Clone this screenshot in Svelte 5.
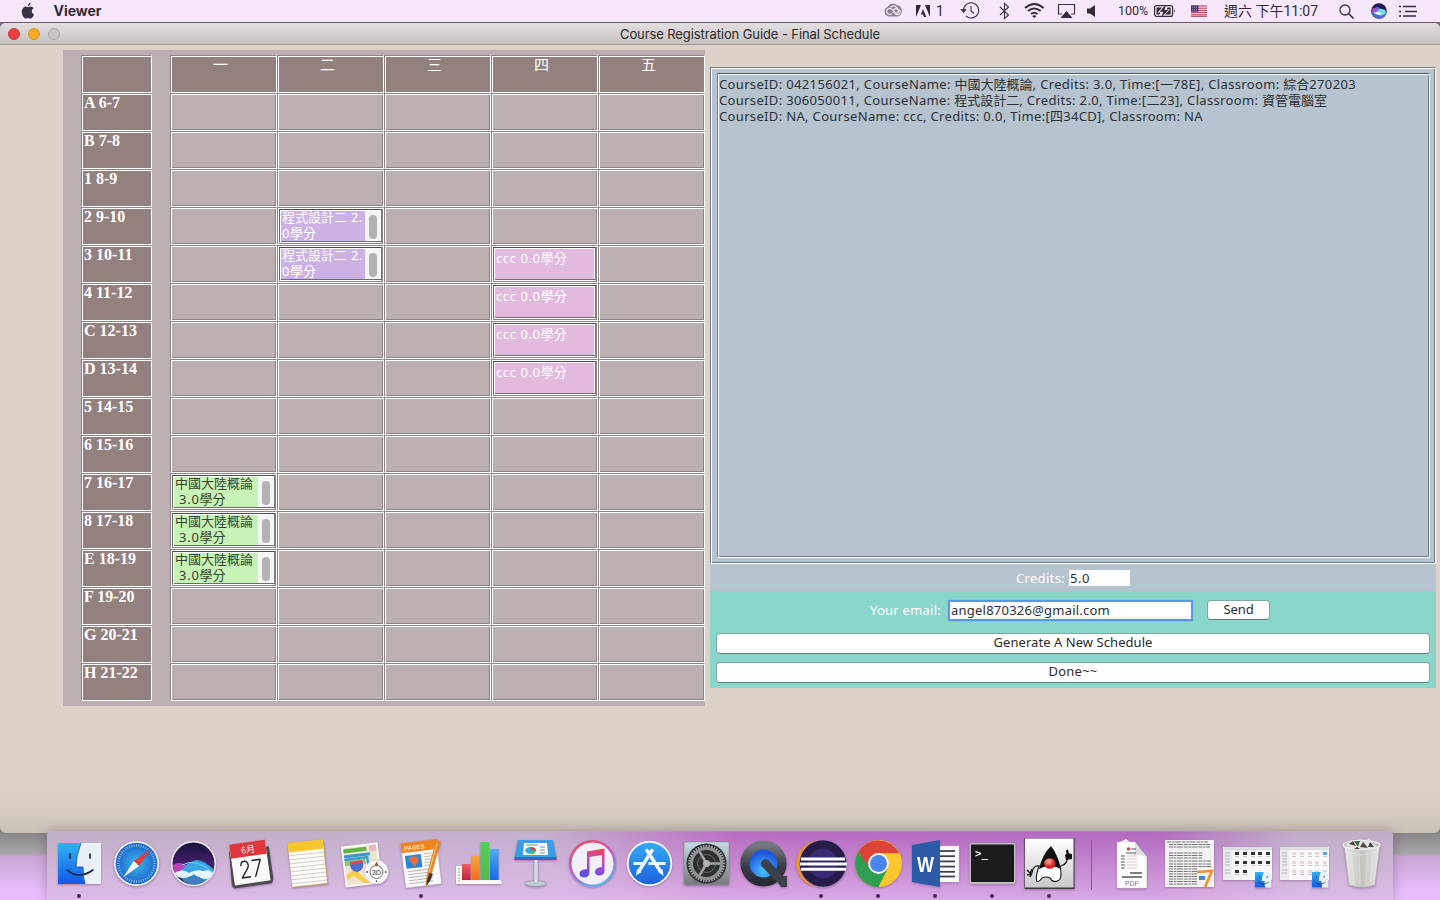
<script>
  const days = ['一', '二', '三', '四', '五'];
  const slots = ['A 6-7', 'B 7-8', '1 8-9', '2 9-10', '3 10-11', '4 11-12', 'C 12-13', 'D 13-14',
    '5 14-15', '6 15-16', '7 16-17', '8 17-18', 'E 18-19', 'F 19-20', 'G 20-21', 'H 21-22'];

  const china = { kind: 'green', lines: ['中國大陸概論', ' 3.0學分'], scroll: true };
  const prog = { kind: 'purple', lines: ['程式設計二 2.', '0學分'], scroll: true };
  const ccc = { kind: 'pink', lines: ['ccc 0.0學分'], scroll: false };
  const booked = {
    '3-1': prog, '4-1': prog,
    '4-3': ccc, '5-3': ccc, '6-3': ccc, '7-3': ccc,
    '10-0': china, '11-0': china, '12-0': china
  };

  const courses = [
    { text: 'CourseID: 042156021, CourseName: 中國大陸概論, Credits: 3.0, Time:[一78E], Classroom: 綜合270203', w: 637 },
    { text: 'CourseID: 306050011, CourseName: 程式設計二, Credits: 2.0, Time:[二23], Classroom: 資管電腦室', w: 608 },
    { text: 'CourseID: NA, CourseName: ccc, Credits: 0.0, Time:[四34CD], Classroom: NA', w: 484 }
  ];

  let email = $state('angel870326@gmail.com');

  const running = ['finder', 'pages', 'eclipse', 'chrome', 'word', 'terminal', 'java'];
  const apps = ['finder', 'safari', 'siri', 'calendar', 'notes', 'maps', 'pages', 'numbers', 'keynote',
    'itunes', 'appstore', 'settings', 'quicktime', 'eclipse', 'chrome', 'word', 'terminal', 'java'];
  const stacks = ['pdf', 'doc', 'folders', 'folders2', 'trash'];

  const isHan = (s) => /[\u4e00-\u9fff]/.test(s);
  const split = (s) => s.split(/([\u4e00-\u9fff]+)/).filter(Boolean);

  // Tracks the Latin text so that the whole run fills the given width.
  function fit(node, width) {
    node.style.letterSpacing = '0px';
    const natural = node.getBoundingClientRect().width;
    let count = node.textContent.length;
    for (const h of node.querySelectorAll('b')) count -= h.textContent.length;
    node.style.letterSpacing = `${(width - natural) / count}px`;
  }

  const ticks = (n) => Array.from({ length: n }, (_, i) => (i * 360) / n);
</script>

{#snippet mixed(text)}{#each split(text) as part}{#if isHan(part)}<b>{part}</b>{:else}{part}{/if}{/each}{/snippet}

{#snippet miniFinder(x, y, s)}
  <g transform="translate({x} {y}) scale({s})">
    <path d="M0 0h43v41H0z" fill="#e9f0f8" />
    <path d="M0 0H23Q18 13 18 24H25Q25 34 27 41H0z" fill="url(#gFinder)" />
    <path d="M12 11v4M32 11v4" stroke="#16233c" stroke-width="1.700" stroke-linecap="round" />
    <path d="M9 27Q21 37 35 27" fill="none" stroke="#16233c" stroke-width="1.600" stroke-linecap="round" />
  </g>
{/snippet}

{#snippet icon(name)}
  <svg class="app" viewBox="0 0 57 57">
    {#if name === 'finder'}
      {@render miniFinder(7, 8, 1)}
      <path d="M30 8Q25 21 25 32H32Q32 42 34 49" fill="none" stroke="#1b4d94" stroke-width=".8" />
    {:else if name === 'safari'}
      <circle cx="28.5" cy="28.5" r="22.8" fill="#eef0f4" stroke="#a9a4b4" stroke-width=".6" />
      <circle cx="28.5" cy="28.5" r="20.8" fill="url(#gSafari)" />
      {#each ticks(48) as a}
        <path d="M28.5 9v2.6" stroke="#c9e6fb" stroke-width=".6" transform="rotate({a} 28.5 28.5)" />
      {/each}
      <path d="M43 14 25.8 26.1 31 31z" fill="#e33b35" />
      <path d="M15 42.5 25.8 26.1 31 31z" fill="#f4f4f4" />
    {:else if name === 'siri'}
      <circle cx="28.5" cy="28.5" r="22.8" fill="#e8e6ee" />
      <circle cx="28.5" cy="28.5" r="21" fill="url(#gSiri)" />
      <path d="M8 30Q14 26 21 30 28 25 35 27T49 34L47 38Q36 44 26 39T9 38z" fill="#e04bd0" opacity=".8" />
      <path d="M13 39Q24 26 31 25T49 35Q44 48 29 49 18 48 13 39z" fill="#23b5ec" opacity=".85" />
      <path d="M9 38Q17 33 24 38 31 34 38 36 45 34 48 38 45 44 40 44 34 44 29 39 21 45 13 42z" fill="#effaff" opacity=".95" />
      <path d="M18 46Q29 36 40 46 29 53 18 46z" fill="#3f7fc0" />
      <path d="M17 30Q31 22 48 38" fill="none" stroke="#6fe3f8" />
    {:else if name === 'calendar'}
      <g transform="rotate(-8 28.5 28.5)">
        <path d="M9 14 7 48l2 3h38l2-4V14z" fill="#4b4b50" />
        <path d="M10 8h36v40H10z" fill="#fafafa" />
        <path d="M10 7h36v14H10z" fill="#dc383d" />
        <text x="28" y="17.5" text-anchor="middle" font-size="9" fill="#fff" class="cjk">6月</text>
        <text x="28.3" y="42.500" text-anchor="middle" font-size="24" fill="#222" class="thin" textLength="24" lengthAdjust="spacingAndGlyphs">27</text>
      </g>
    {:else if name === 'notes'}
      <g transform="rotate(-6 28.5 28.5)">
        <path d="M11 7h36v44H11z" fill="#c4a262" />
        <path d="M11 7h35v43H11z" fill="#fdfcf7" />
        <path d="M11 6h35v9.500H11z" fill="#f6c62d" />
        {#each [19, 23, 27, 31, 35, 39, 43, 47] as y}
          <path d="M11 {y}h35" stroke="#c8c5c1" stroke-width=".8" />
        {/each}
      </g>
    {:else if name === 'maps'}
      <g transform="rotate(-7 28.5 28.5)">
        <path d="M7 9h37v41H7z" fill="#fafaf5" />
        <path d="M9 11h33v37H9z" fill="#ece5d2" />
        <path d="M9 12h23v4H9z" fill="#5fb447" />
        <path d="M9 18h26v3H9z" fill="#3a94d0" />
        <path d="M9 23h21v6H9z" fill="#8fc97a" />
        <path d="M9 22.500h23v20" fill="none" stroke="#3a9cd4" stroke-width="2.500" />
        <path d="M9 38l7-4q5 0 7 5l9 9h-6l-10-9-7 4z" fill="#f7cd45" />
        <path d="M35 11h7v6h-7z" fill="#efb5bf" />
        <path d="M14 26h13v4q-1 5-6.500 6-5.500-1-6.500-6z" fill="#4b6fcf" />
        <path d="M14 25h13v3H14z" fill="#d9455a" />
      </g>
      <circle cx="40.5" cy="37" r="12" fill="#fff" stroke="#b9b6ba" stroke-width=".6" />
      <circle cx="40.500" cy="37" r="6.500" fill="none" stroke="#444" stroke-width=".8" />
      <text x="40.5" y="39.700" text-anchor="middle" font-size="7" fill="#222" class="sans">3D</text>
      <path d="M38.500 30.500l2-4 2 4z" fill="#c93232" />
      <path d="M40.500 45.500v1.500M30.500 37h1.500M49 37h1.500" stroke="#333" stroke-width="1.300" />
    {:else if name === 'pages'}
      <g transform="rotate(-7 28.5 28.5)">
        <path d="M10 8h36v43H10z" fill="#fafafa" stroke="#b8b3b3" stroke-width=".4" />
        <path d="M10 6h37v10H10z" fill="#ee8522" />
        <text x="13" y="13.700" font-size="6" font-weight="700" fill="#ffe3b8" class="sans">PAGES</text>
        <path d="M13 19h16v13H13z" fill="#2c86d8" />
        <path d="M16 22q5-3 10 0 0 5-5 9-2-5-5-9z" fill="#ef6b33" />
        {#each [19, 22, 25, 28, 31] as y}<path d="M32 {y}h8" stroke="#b5b5b5" />{/each}
        {#each [35, 38, 41, 44, 47] as y}<path d="M14 {y}h24" stroke="#b5b5b5" />{/each}
      </g>
      <path d="M43 5l5 1.500-10 35-4 9-1.500-.5 1.500-11z" fill="#e28a2e" />
      <path d="M36.500 38l3.500 1-3 7-3.500 5 .5-6z" fill="#3b3230" />
      <path d="M44 8l-8 29" stroke="#ffc576" />
    {:else if name === 'numbers'}
      <path d="M6 31h6v18H6zM6 45h45l1 4H6z" fill="#f7f7f7" />
      {#each [34, 37, 40, 43, 46] as y}<path d="M8 {y}h2" stroke="#888" stroke-width=".8" />{/each}
      <path d="M12 29h8.500v16H12z" fill="url(#gRed)" />
      <path d="M21.500 20h8v25h-8z" fill="url(#gOrange)" />
      <path d="M30.500 7h8.500v38h-8.500z" fill="url(#gGreen)" />
      <path d="M40 14h8.500v31H40z" fill="url(#gBlue)" />
    {:else if name === 'keynote'}
      <ellipse cx="28.500" cy="48.500" rx="10.500" ry="3" fill="#c5ccd5" stroke="#858c99" stroke-width=".6" />
      <path d="M27 24h4v24h-4z" fill="#d5dce5" stroke="#929ba9" stroke-width=".5" />
      <path d="M11 5h35l3.500 17H7.500z" fill="#3c9ce6" />
      <path d="M7.500 22h42v3h-42z" fill="#2273b8" />
      <path d="M17 8h23l1 12H16z" fill="#fff" />
      <ellipse cx="23.500" cy="15.500" rx="5.500" ry="3.500" fill="#36aee0" />
      <path d="M23.500 15.500V12q5 0 5.500 3.500z" fill="#df4040" />
      <path d="M23.500 15.500H29q-1 3.500-5.500 3.500z" fill="#48b658" />
      <path d="M19 10h12M33 12h5M33 15h5M33 18h5" stroke="#777" stroke-width=".9" />
    {:else if name === 'itunes'}
      <circle cx="28.500" cy="28.500" r="23.500" fill="url(#gRing)" />
      <circle cx="28.500" cy="28.500" r="21" fill="#f3eff6" />
      <path d="M23 16.500 40.500 13.500v22q0 4.500-4.500 5-5 0-5-3.500 0-4.500 7-5V20L25.500 22V37q0 5-5 5.500-5 0-5-4 0-4 7.500-4.500z" fill="url(#gNote)" />
    {:else if name === 'appstore'}
      <circle cx="28.500" cy="28.500" r="22.800" fill="#f0f2f6" />
      <circle cx="28.500" cy="28.500" r="20.800" fill="url(#gStore)" />
      <g stroke="#f0f7ff" stroke-width="3.400" fill="none" stroke-linecap="round">
        <path d="M26 15.500l13.500 21M31 15.500L18 36" />
        <path d="M12.500 28.500h9M27.500 28.500h17" stroke-linecap="butt" stroke-width="2.800" />
      </g>
      <path d="M37 36.500l4.500-2.500 1 7zM16 34l4.500 3-5.500 3.500z" fill="#f0f7ff" />
    {:else if name === 'settings'}
      <rect x="6" y="7" width="45" height="43" rx="2" fill="url(#gSteel)" stroke="#8c8f95" stroke-width=".6" />
      <circle cx="28.500" cy="28.500" r="20" fill="#303234" />
      {#each ticks(40) as a}
        <path d="M28.500 10v4" stroke="#a2a4a6" stroke-width="1.500" transform="rotate({a} 28.500 28.500)" />
      {/each}
      <circle cx="28.500" cy="28.500" r="15" fill="#2d2f31" stroke="#909294" stroke-width="3" />
      {#each [90, 210, 330] as a}
        <path d="M28.500 28.500V15" stroke="#a0a2a4" stroke-width="2.600" transform="rotate({a} 28.500 28.500)" />
      {/each}
      <circle cx="28.500" cy="28.500" r="3.500" fill="#b0b2b4" />
      <circle cx="28.500" cy="28.500" r="9" fill="none" stroke="#77797b" stroke-width=".8" />
    {:else if name === 'quicktime'}
      <circle cx="28.500" cy="28.500" r="18.500" fill="url(#gQt)" stroke="url(#gQtRing)" stroke-width="9" />
      <path d="M27 26q3-4 7 0l14 15h4v11h-6l-2-3L27 31.500q-2-3 0-5.500z" fill="#3c4049" />
    {:else if name === 'eclipse'}
      <circle cx="26" cy="28.500" r="23" fill="#ee922e" />
      <circle cx="30" cy="28.500" r="23.500" fill="#271b4a" stroke="#c8a6d2" stroke-width=".4" />
      <circle cx="30" cy="28.500" r="15" fill="#3a2870" />
      <path d="M8 22.500h44v3H8zM7 27.500h47v3H7zM8 32.700h45v3H8z" fill="#fff" />
    {:else if name === 'chrome'}
      <circle cx="28.500" cy="28.500" r="23.500" fill="#fbc72f" />
      <path d="M28.500 18.200H49.300A23.500 23.500 0 0 0 8.200 16.800l10.500 17.500z" fill="#db4437" />
      <path d="M8.200 16.800A23.500 23.500 0 0 0 28.500 52l9-18-18-1z" fill="#2f9e50" />
      <circle cx="28.500" cy="28.500" r="10.400" fill="#f6f6f6" />
      <circle cx="28.500" cy="28.500" r="8.500" fill="#4a86ea" />
    {:else if name === 'word'}
      <path d="M30 11h22v36H30z" fill="#fbfbfc" stroke="#ccd" stroke-width=".5" />
      {#each [16, 21.200, 26.400, 31.600, 36.800, 41.500] as y}<path d="M33 {y}h15" stroke="#3a4250" stroke-width="1.800" />{/each}
      <path d="M5 10 33 5v47L5 47z" fill="#2c5aa5" />
      <text x="10" y="36.500" font-size="22" textLength="17" lengthAdjust="spacingAndGlyphs" font-weight="700" fill="#fff" class="sans">W</text>
    {:else if name === 'terminal'}
      <rect x="5.500" y="8" width="46" height="41" rx="2" fill="#bdbdbd" />
      <rect x="7" y="9.500" width="43" height="37.500" rx="1" fill="#1b1b1c" />
      <text x="11" y="22" font-size="11" font-weight="700" fill="#eee" class="mono">&gt;_</text>
    {:else if name === 'java'}
      <path d="M3.500 3h50v51h-50z" fill="#3a3a3a" />
      <path d="M4 3.500h48.500v49H4z" fill="url(#gJava)" />
      <path d="M18 31Q12 30 11 38M40 31Q47 29 46 22" fill="none" stroke="#111" stroke-width="1.200" />
      <path d="M6 35l4 4M6 40l5-1M9 42l2-4M11 34l-2 5" stroke="#111" stroke-width="1.400" />
      <path d="M44 20l1 5 6-1v-5l-3-.5-1-4-2 1 .500 3.500z" fill="#111" />
      <path d="M18 31Q14 43 16 46.500 18 47 21 43 25 41 29 43 32 48 36 46 42 45 39 31z" fill="#fff" stroke="#111" stroke-width="1.100" />
      <path d="M30 11Q21 20 18 34q11-6 22 0Q37 20 30 11z" fill="#111" />
      <ellipse cx="28.800" cy="28.500" rx="5.800" ry="5.200" fill="url(#gNose)" />
    {:else if name === 'pdf'}
      <path d="M14 8l8-4 17 13 4 5v31H14z" fill="#f0f0f0" />
      <path d="M13 7h18l11 15v31H13z" fill="#fff" stroke="#d3cbd5" stroke-width=".5" />
      <path d="M31 7q0 10-1 13 7-1 12 2z" fill="#dedede" />
      <circle cx="24.500" cy="14" r="1.800" fill="#cf4452" />
      <path d="M27 14h5M22 18h10" stroke="#555" stroke-width="1.200" />
      {#each [21, 24, 27, 30, 33] as y}<path d="M17 {y}h4" stroke="#555" /><path d="M23 {y}h10" stroke="#d9a4a4" stroke-width=".7" />{/each}
      <path d="M26 38h12M18 42h20" stroke="#555" stroke-width="1.400" />
      <text x="28" y="50.500" font-size="7" text-anchor="middle" fill="#777" class="sans">PDF</text>
    {:else if name === 'doc'}
      <path d="M4 5h49v47H4z" fill="#f3f1f3" />
      {#each [7, 9.500, 12, 18, 20.500, 23, 26, 29, 31.500, 34, 36.500, 39, 41.500, 44, 46.500, 49] as y, i}
        <path d="M{i === 0 ? 6 : 8} {y}h{i < 3 ? 41 : i < 6 ? 34 : i > 8 ? 28 : 42}" stroke="#777" stroke-width="1.100" stroke-dasharray="4 .7 2.500 .6 6 .9" />
      {/each}
      <path d="M36 37l15-1-7 16" fill="none" stroke="#ef922d" stroke-width="2.600" />
      <path d="M38 41h6v4h-6z" fill="#3b8cd0" />
    {:else if name === 'folders' || name === 'folders2'}
      <path d="M4 12h49v33H4z" fill="#f8f8fa" />
      <path d="M4 12h49v3H4z" fill="#dedee2" />
      <path d="M4 15h9v30H4z" fill="#ececf0" />
      {#each [18, 21, 24, 27, 30, 35, 38] as y}<path d="M6 {y}h5" stroke="#999" stroke-width=".7" />{/each}
      {#each [17, 26, 35] as y, r}
        {#each [16, 24, 32, 39, 47] as x, c}
          {#if r < 2 || c < 2 || name === 'folders2'}
            <path d="M{x} {y}h4v3h-4z" fill={name === 'folders' ? '#30352f' : r === 0 && c === 4 ? '#49a8e8' : '#ead5d8'} />
            <path d="M{x} {y + 4.500}h4" stroke="#aaa" stroke-width=".6" />
          {/if}
        {/each}
      {/each}
      {@render miniFinder(36, 37, 0.38)}
    {:else}
      <path d="M11 10h36l-5 40q-13 5-26 0z" fill="url(#gTrash)" stroke="#aca8ac" stroke-width=".7" />
      <ellipse cx="28.500" cy="10" rx="18.500" ry="4.500" fill="#c2c4c0" stroke="#f2f2f2" stroke-width="1.300" />
      <path d="M13 10l5-5 5 2 4-3 4 4 5-5 3 6 5 2-9 4H19z" fill="#e4e4e2" />
      <path d="M16 9l4-3 3 5zM27 12l3-5 5 6zM37 7l4 5h-6zM24 12l3 2h-6z" fill="#503f3c" />
      <path d="M21 6l6 0-2 6z" fill="#3c6f59" />
      <path d="M18 18l3 31M26 18l1 33M35 18l-2 32M40 17l-3 30M14 17q13 5 29 0" stroke="#f4f4f1" stroke-width=".7" fill="none" opacity=".5" />
    {/if}
  </svg>
{/snippet}

<svg class="defs" width="0" height="0">
  <defs>
    <linearGradient id="gFinder" x2="0" y2="1"><stop stop-color="#2fb4f1" /><stop offset="1" stop-color="#1458e6" /></linearGradient>
    <radialGradient id="gSafari"><stop stop-color="#3fb9ea" /><stop offset="1" stop-color="#1c63cf" /></radialGradient>
    <linearGradient id="gSiri" x2="0" y2="1"><stop stop-color="#171238" /><stop offset=".5" stop-color="#45206c" /><stop offset="1" stop-color="#17213f" /></linearGradient>
    <linearGradient id="gRed" x2="0" y2="1"><stop stop-color="#ef5a62" /><stop offset="1" stop-color="#bd2238" /></linearGradient>
    <linearGradient id="gOrange" x2="0" y2="1"><stop stop-color="#f9a83e" /><stop offset="1" stop-color="#ef6e1c" /></linearGradient>
    <linearGradient id="gGreen" x2="0" y2="1"><stop stop-color="#4fd053" /><stop offset="1" stop-color="#5cb857" /></linearGradient>
    <linearGradient id="gBlue" x2="0" y2="1"><stop stop-color="#4eabf2" /><stop offset="1" stop-color="#1b67e8" /></linearGradient>
    <linearGradient id="gRing" x1=".2" y1="0" x2=".7" y2="1"><stop stop-color="#f2485a" /><stop offset=".5" stop-color="#c25bd0" /><stop offset="1" stop-color="#4fbdf0" /></linearGradient>
    <linearGradient id="gNote" x1=".6" x2=".4" y2="1"><stop stop-color="#f0435b" /><stop offset=".5" stop-color="#b04bd0" /><stop offset="1" stop-color="#5a4fe2" /></linearGradient>
    <linearGradient id="gStore" x2="0" y2="1"><stop stop-color="#35aaf5" /><stop offset="1" stop-color="#1d62dc" /></linearGradient>
    <linearGradient id="gSteel" x2="0" y2="1"><stop stop-color="#c5dbe4" /><stop offset="1" stop-color="#77797c" /></linearGradient>
    <radialGradient id="gQt" cy=".7"><stop stop-color="#47c4ff" /><stop offset="1" stop-color="#1c53dd" /></radialGradient>
    <linearGradient id="gQtRing" x2="0" y2="1"><stop stop-color="#757981" /><stop offset=".6" stop-color="#363a43" /><stop offset="1" stop-color="#292b33" /></linearGradient>
    <linearGradient id="gJava" x2="0" y2="1"><stop stop-color="#fff" /><stop offset="1" stop-color="#c9c9cb" /></linearGradient>
    <radialGradient id="gNose" cx=".4" cy=".3"><stop stop-color="#ffb0a5" /><stop offset="1" stop-color="#d8201c" /></radialGradient>
    <linearGradient id="gTrash" x2="1" y2="0"><stop stop-color="#ecebea" /><stop offset=".5" stop-color="#c5c5c0" /><stop offset="1" stop-color="#e9e7e8" /></linearGradient>
  </defs>
</svg>

<div class="screen">
  <header class="menubar">
    <svg class="apple" width="14" height="17" viewBox="0 0 14 17">
      <path d="M9.800.5Q9.900 3 7 4.200 6.900 1.600 9.800.5zM7 5.200Q8 4.600 9.400 4.500q2 0 3.200 1.600-1.900 1.200-1.800 3.200.1 2.200 2.200 3.200-1 2.800-2.900 4-.9.200-2-.3-1.200-.4-2.300 0-1.100.5-1.800.3Q1.300 14.800.8 10.900.5 6.300 3.300 4.900q1.500-.7 3.700.3z" fill="#39303f" />
    </svg>
    <span class="appname"><span use:fit={48}>Viewer</span></span>
    <div class="status">
      <svg style:width="33px" viewBox="0 0 33 22">
        <path d="M5.500 16.500a5 5 0 0 1-1-9.500A6.500 6.500 0 0 1 14 5a6 6 0 0 1 1 11.500z" fill="#8c8290" />
        <g fill="none" stroke="#f4e6f9" stroke-width="1.200">
          <path d="M9 13.500q-2 1.500-4 .3a3 3 0 0 1 1-5.400q1.500-.4 3 1l4 4" />
          <path d="M7.500 7.500q2-2.500 5-1 2 1 2 2.800 3.500.7 2.500 3.700-1.500 2.500-4.500 1" /><circle cx="13" cy="11" r="2.400" />
        </g>
      </svg>
      <span class="adobe">
        <svg width="14" height="12" viewBox="0 0 14 12"><path d="M0 0h5L0 12zM9 0h5v12zM7 4l3.300 8H8l-1-2.500H4.800z" fill="#2f2735" /></svg>
        <span>1</span>
      </span>
      <svg style:width="39px" viewBox="0 0 39 22" fill="none" stroke="#3b3341" stroke-width="1.100">
        <path d="M3.500 10.500a7.600 7.600 0 1 1 2.500 5.500M11 6v5l3 2.500" /><path d="M.3 9l6.600.3-3.500 3.700z" fill="#3b3341" stroke="none" />
      </svg>
      <svg style:width="25px" viewBox="0 0 25 22"><path d="M1 7l8.500 8-4 3.500v-15L9.500 7 1 15" fill="none" stroke="#3b3341" stroke-width="1.100" /></svg>
      <svg style:width="33px" viewBox="0 0 33 22" fill="none" stroke="#342b3a" stroke-width="1.900">
        <path d="M1 8q9.300-8 18.600 0M4 11q6.300-5.200 12.600 0M7 14q3.300-2.600 6.600 0" /><path d="M8 16q2.300-1.500 4.600 0l-2.300 2z" fill="#342b3a" stroke="none" />
      </svg>
      <svg style:width="29px" viewBox="0 0 29 22"><path d="M5 14H1.500V4.500h16V14H14" fill="none" stroke="#3b3341" stroke-width="1.200" /><path d="M3.500 18h12l-6-7z" fill="#342b3a" /></svg>
      <svg style:width="32px" viewBox="0 0 32 22"><path d="M1 8.500h3L9 5v12l-5-3.500H1z" fill="#342b3a" /></svg>
      <span class="pct"><span use:fit={30}>100%</span></span>
      <svg style:width="39px" viewBox="0 0 39 22">
        <rect x="2.600" y="5.600" width="18" height="10.800" rx="2" fill="none" stroke="#342b3a" stroke-width="1.200" />
        <path d="M4.500 7.500H10l-4.500 5h3l-1 2h-3zM15.500 7.500h3.200v7H13l5-5h-3.300z" fill="#342b3a" />
        <path d="M14 4.500l-6.500 7.200h3.700L9.500 17l6.800-7h-3.800z" fill="#342b3a" />
        <path d="M22 9q1.500 2 0 4z" fill="#342b3a" />
      </svg>
      <svg style:width="33px" viewBox="0 0 33 22">
        <path d="M0 5.500h16v11H0z" fill="#f5dfe6" />
        <path d="M0 6h16M0 8.200h16M0 10.400h16M0 12.600h16M0 14.800h16M0 16.300h16" stroke="#b5384c" stroke-width="1" />
        <path d="M0 5.500h7.500v6.200H0z" fill="#3b3a75" />
        <path d="M1 7.200h6M1 9.700h6" stroke="#c4bedd" stroke-width=".8" stroke-dasharray="1 1" />
      </svg>
      <span class="clock"><span use:fit={94}>{@render mixed('週六 下午11:07')}</span></span>
      <svg style:width="32px" viewBox="0 0 32 22" fill="none" stroke="#3b3341" stroke-width="1.300"><circle cx="6" cy="10" r="5" /><path d="M9.500 13.500l5 5" stroke-width="1.700" /></svg>
      <svg style:width="28px" viewBox="0 0 28 22">
        <circle cx="8" cy="11" r="7.800" fill="#20184a" />
        <path d="M.5 12Q5 5 9 8t6.500 3Q15 18 8 18.700 2 18 .5 12z" fill="#4a6bd8" />
        <path d="M2 14q5-7 12-4l1 3q-4 4-8 1.500T2 14z" fill="#6fe0f2" />
        <path d="M3 13q5-2 8 1-4 2-8-1z" fill="#fff" />
        <path d="M1 9q3-3 7 2l-6 2z" fill="#c14bc4" opacity=".8" />
      </svg>
      <svg style:width="41px" viewBox="0 0 41 22"><path d="M4 6.500h13M6 11.500h12M4 16h13M0 6.500h2M0 11.500h2M0 16h2" stroke="#342b3a" stroke-width="1.700" /></svg>
    </div>
  </header>

  <main class="window">
    <div class="titlebar">
      <i class="light red"></i><i class="light amber"></i><i class="light off"></i>
      <h1><span use:fit={260}>Course Registration Guide - Final Schedule</span></h1>
    </div>
    <div class="body">
      <section class="schedule">
        <div class="labels">
          <div class="cell label"></div>
          {#each slots as s}<div class="cell label">{s}</div>{/each}
        </div>
        <div class="grid">
          {#each days as d}<div class="cell label day">{d}</div>{/each}
          {#each slots as _, r}
            {#each days as _, c}
              {@const b = booked[`${r}-${c}`]}
              <div class="cell">
                {#if b}
                  <div class="pane {b.kind}">
                    <div class="txt">{#each b.lines as l}<div>{@render mixed(l)}</div>{/each}</div>
                    {#if b.scroll}<div class="bar"><i></i></div>{/if}
                  </div>
                {/if}
              </div>
            {/each}
          {/each}
        </div>
      </section>

      <section class="side">
        <div class="listwrap">
          <div class="list">
            {#each courses as c}<div class="line"><span use:fit={c.w}>{@render mixed(c.text)}</span></div>{/each}
          </div>
        </div>
        <div class="credits">
          <span class="lbl" use:fit={49}>Credits:</span>
          <span class="total"><span use:fit={20}>5.0</span></span>
        </div>
        <div class="actions">
          <div class="mail">
            <span class="lbl" use:fit={71}>Your email:</span>
            <span class="input"><span use:fit={159}>{email}</span></span>
            <button class="send"><span use:fit={30}>Send</span></button>
          </div>
          <button class="wide"><span use:fit={159}>Generate A New Schedule</span></button>
          <button class="wide"><span use:fit={49}>Done~~</span></button>
        </div>
      </section>
    </div>
  </main>

  <nav class="dock">
    {#each apps as a}
      <div class="slot">{@render icon(a)}{#if running.includes(a)}<i class="dot"></i>{/if}</div>
    {/each}
    <div class="sep"></div>
    {#each stacks as a}
      <div class="slot">{@render icon(a)}</div>
    {/each}
  </nav>
</div>

<style>
  :global(body) { margin: 0; overflow: hidden; }
  .defs { position: absolute; }
  .screen {
    position: relative; width: 1440px; height: 900px; overflow: hidden; box-sizing: border-box;
    background: linear-gradient(#8d708f 0 60px, #828282 830px, #a9a6a9 854px, #c9a4d3 856px, #e7bdfb 890px);
    font-family: "Noto Sans", "Noto Sans CJK TC", sans-serif; font-size: 13px; color: #2b3034;
  }
  .screen span { white-space: pre; }
  b { font-weight: inherit; letter-spacing: 0; }
  .sans { font-family: "Liberation Sans", sans-serif; }
  .mono { font-family: "DejaVu Sans Mono", monospace; }
  .cjk { font-family: "Noto Sans CJK TC", sans-serif; }
  .thin { font-family: Inter, sans-serif; font-weight: 300; }

  .menubar {
    display: flex; height: 23px; box-sizing: border-box; border-bottom: 1px solid #6a5a70;
    background: #f6e7fb; color: #342b3a; font: 14px/22px Roboto, "Noto Sans CJK TC", sans-serif;
  }
  .apple { margin: 2px 0 0 20.500px; }
  .appname { margin-left: 19px; font-family: Inter, sans-serif; font-weight: 700; font-size: 14px; }
  .status { display: flex; margin-left: auto; width: 557px; }
  .status svg { display: block; flex: none; }
  .status > svg { height: 22px; }
  .adobe { display: flex; width: 44px; align-items: center; gap: 6px; flex: none; }
  .pct { width: 34px; font-size: 12.500px; flex: none; }
  .clock { width: 115px; height: 22px; line-height: 23px; font-size: 14px; flex: none; }

  .window {
    height: 810px; border-radius: 6px; overflow: hidden;
    background: linear-gradient(#dcd2c9 740px, #d9cfc6 775px, #cbc2b8 810px);
  }
  .titlebar {
    display: flex; align-items: center; gap: 8px; height: 22px; box-sizing: border-box; padding-left: 8px;
    background: linear-gradient(#e3dfe1, #c7c2c1); border-bottom: 1px solid #a09894;
  }
  .light { width: 12px; height: 12px; border-radius: 50%; box-sizing: border-box; flex: none; }
  .red { background: #ed3e42; border: 1px solid #cf3236; }
  .amber { background: #f7aa27; border: 1px solid #db931d; }
  .off { background: #c9c5c3; border: 1px solid #aaa5a3; }
  h1 {
    flex: 1; margin: 1px 8px 0 0; text-align: center; font: 400 13px/21px Inter, sans-serif; color: #2d2a2b;
  }
  .body { display: flex; gap: 5px; padding-left: 63px; }

  .schedule {
    display: flex; gap: 18px; margin-top: 5px; width: 642px; height: 656px; box-sizing: border-box;
    padding: 5px 0 5px 18px; background: #bbb0af;
  }
  .labels { width: 71px; }
  .grid { display: grid; grid-template-columns: repeat(5, 107px); grid-auto-rows: 38px; }
  .cell {
    height: 38px; box-sizing: border-box; padding: 1px;
    border: 1px solid #fff; border-top-color: #8b8483; border-left-color: #8b8483;
    box-shadow: inset 1px 1px #fff, inset -1px -1px #8b8483;
  }
  .label {
    background: #938180; color: #fff; padding: 0 0 0 2px;
    font: 700 16px/18px "Liberation Serif", "Noto Sans CJK TC", serif;
  }
  .day { text-align: center; font-weight: 400; font-size: 15px; line-height: 19px; padding-right: 8px; }
  .pane {
    display: flex; width: 103px; height: 34px; box-sizing: border-box;
    border: 1px solid #fff; border-top-color: #4e4b4e; border-left-color: #66636a; border-right-color: #77747a;
    box-shadow: inset 1px 1px #fff, inset 0 -1px #6f6c70, inset -1px 0 #fff;
    padding: 1px; line-height: 16px;
  }
  .txt { flex: 1; height: 30px; white-space: pre; padding-left: 1px; }
  .txt div { height: 16px; margin-top: -2px; margin-bottom: 2px; }
  .green .txt { background: #c8f3b7; color: #36432f; letter-spacing: .7px; }
  .purple .txt { background: #ccb2e4; color: #fff; letter-spacing: .5px; }
  .pink .txt { background: #e1badd; color: #fff; letter-spacing: .6px; }
  .pink .txt div { margin-top: 1px; }
  .bar { width: 15px; height: 30px; background: #f5f4f5; }
  .bar i { display: block; width: 8px; height: 24px; margin: 4px 0 0 4px; border-radius: 4px; background: #b3b2b3; }

  .side { width: 726px; margin-top: 22px; }
  .listwrap {
    height: 497px; box-sizing: border-box; padding: 5px 5px 5px 6px; background: #b7c4cf;
    border: 1px solid #fff; border-top-color: #6d7b88; border-left-color: #6d7b88;
    box-shadow: inset 1px 1px #fff, inset -1px -1px #6d7b88;
  }
  .list {
    height: 100%; box-sizing: border-box; padding: 2px 0 0 1px;
    border: 1px solid #fff; border-top-color: #4f5a64; border-left-color: #6d7b88;
    box-shadow: inset 1px 1px #fff, inset -1px -1px #6d7b88;
  }
  .line { height: 16px; line-height: 16px; }
  .credits {
    display: flex; justify-content: center; align-items: center; gap: 4px; height: 27px; background: #b7c3cf;
  }
  .lbl { color: #fff; }
  .total { width: 61px; height: 16px; line-height: 16px; background: #fff; box-sizing: border-box; padding-left: 1px; }
  .actions { height: 97px; box-sizing: border-box; padding: 9px 6px 0 6px; background: #8ad6cb; }
  .mail { display: flex; align-items: center; height: 20px; margin: 0 0 13px 154px; }
  .input {
    width: 245px; height: 21px; line-height: 17px; margin: 0 14px 0 7px; box-sizing: border-box; padding-left: 1px;
    background: #fff; border: 2px solid #5d97dd; box-shadow: 0 0 1px #5d97dd;
  }
  button {
    display: block; padding: 0 0 2px; border: 1px solid #7ba9a3; border-bottom-color: #62817d; border-radius: 4px;
    background: #fff; font: inherit; color: #2b2b2b; box-sizing: border-box; line-height: 17px;
  }
  .send { width: 63px; height: 20px; margin-top: -1px; }
  .wide { width: 714px; height: 21px; margin-bottom: 8px; }

  .dock {
    position: absolute; left: 47px; top: 831px; width: 1346px; height: 69px; box-sizing: border-box;
    display: flex; padding: 4px 0 0 3.500px; border-radius: 4px 4px 0 0;
    background:
      linear-gradient(transparent, rgba(230, 190, 242, .75)),
      linear-gradient(90deg, #bfafc5 0, #c3afcc 500px, #b76ac0 690px, #b069bd 1110px, #bfaec6 1250px);
    box-shadow: 0 0 12px rgba(70, 50, 70, .35), inset 0 1px rgba(190, 175, 190, .4);
  }
  .slot { position: relative; width: 57.080px; height: 65px; flex: none; }
  .app { display: block; width: 57px; height: 57px; filter: drop-shadow(0 1px 1px rgba(60, 30, 70, .35)); overflow: visible; }
  .dot { position: absolute; left: 26.500px; bottom: 2px; width: 4px; height: 4px; border-radius: 50%; background: #4b2554; }
  .sep { width: 1px; height: 50px; margin: 5px 12px 0 13.500px; background: #8b5797; flex: none; }
</style>
